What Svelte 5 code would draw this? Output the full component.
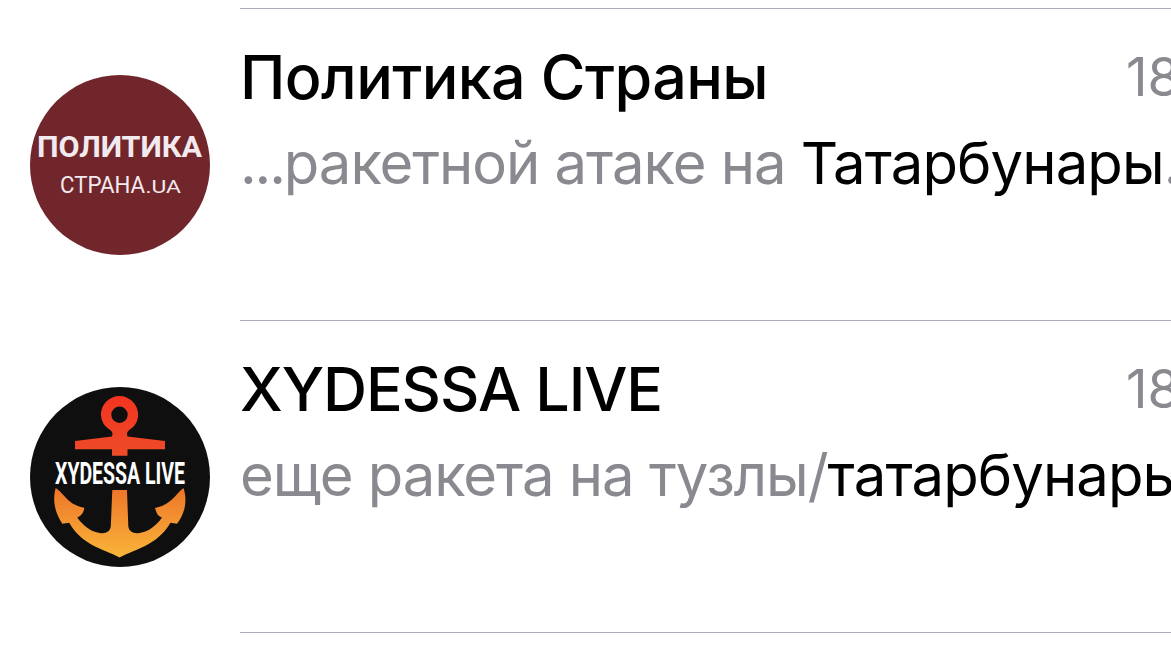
<script lang="ts">
  interface Part {
    text: string;
    kind?: 'match' | 'lead';
  }

  interface Chat {
    id: string;
    title: string;
    time: string;
    parts: Part[];
  }

  const chats: Chat[] = [
    {
      id: 'politika',
      title: 'Политика Страны',
      time: '18:05',
      parts: [
        { text: '...', kind: 'lead' },
        { text: 'ракетной атаке на ' },
        { text: 'Татарбунары', kind: 'match' },
        { text: '...' }
      ]
    },
    {
      id: 'xydessa',
      title: 'XYDESSA LIVE',
      time: '18:04',
      parts: [
        { text: 'еще ракета на тузлы/' },
        { text: 'татарбунары', kind: 'match' }
      ]
    }
  ];
</script>

<div class="chat-list">
  {#each chats as chat (chat.id)}
    <div class="chat">
      <svg class="avatar" viewBox="0 0 180 180" aria-label={chat.title}>
        {#if chat.id === 'politika'}
          <circle cx="90" cy="90" r="90" fill="#70262a" />
          <text class="logo-bold" x="7" y="81.5" textLength="165" lengthAdjust="spacingAndGlyphs">ПОЛИТИКА</text>
          <text class="logo-thin" x="30" y="117.5" textLength="85" lengthAdjust="spacingAndGlyphs">СТРАНА</text>
          <text class="logo-small" x="115.5" y="117.5" textLength="35.5" lengthAdjust="spacingAndGlyphs">.UA</text>
        {:else}
          <defs>
            <linearGradient id="anchor" gradientUnits="userSpaceOnUse" x1="0" y1="9" x2="0" y2="171">
              <stop offset="0" stop-color="#f23420" />
              <stop offset="0.35" stop-color="#ee4a28" />
              <stop offset="0.62" stop-color="#ef7d2b" />
              <stop offset="1" stop-color="#f9b53a" />
            </linearGradient>
          </defs>
          <circle cx="90" cy="90" r="90" fill="#0e0f0e" />
          <g fill="url(#anchor)">
            <path
              fill-rule="evenodd"
              d="M89.500 9a18.600 18.600 0 0 1 18.600 18.600c0 7-3.600 12.500-9.100 15.600-2 1.500-2.500 4-1.500 6.200l37.500 4.500v8.400H97.500v6.400H82v-6.400H45v-8.400l37-4.500c1-2.200.500-4.700-1.500-6.200a18.600 18.600 0 0 1-9.600-15.600A18.600 18.600 0 0 1 89.500 9zM89.500 19.500a8.200 8.200 0 1 0 0 16.400 8.200 8.200 0 0 0 0-16.400z"
            />
            <path
              d="M82.300 103H97l1.300 36c.300 5 4.700 8 11.200 7 9-1.300 17-7.500 22.500-15.500-4-1.500-5-3-7-9.500 10.500-2 16-7.500 20-11.500 3-3.500 5.500-6.500 8.500-8.500 3 9 2.200 18.500-.500 25-1.500 4-3.500 7.500-6 10.700l-6.500-1c-5.500 9.500-14.500 18-26 23.500-10 4.500-18 7.500-25 11.300-7-3.800-15-6.800-25-11.300-11-5.500-20-14-25.300-23.500l-6.900 1c-5.300-8-7.300-14.700-8-21.700-.400-5 .200-10 1.400-14 3.300 2 5.800 5 9 8.500 4.300 4.500 9 9.500 19.600 11.200-.300 4.300-3 8.300-7 9.800 5.500 8 13.500 14.200 22.500 15.500 6.500 1 10.700-2 11-7z"
            />
          </g>
          <text class="logo-narrow" x="25" y="97" textLength="130" lengthAdjust="spacingAndGlyphs">XYDESSA LIVE</text>
        {/if}
      </svg>
      <div class="body">
        <div class="head">
          <span class="title {chat.id}">{chat.title}</span>
          <span class="time">{chat.time}</span>
        </div>
        <div class="message">
          {#each chat.parts as part}<span class={part.kind}>{part.text}</span>{/each}
        </div>
      </div>
    </div>
  {/each}
</div>

<style>
  :global(body) {
    background: #fff;
    overflow: hidden;
  }

  .chat-list {
    height: 649px;
    padding-top: 8px;
    box-sizing: border-box;
    overflow: hidden;
    font-family: Inter, 'Liberation Sans', sans-serif;
  }

  .chat {
    display: flex;
    gap: 30px;
    height: 312px;
    padding-left: 30px;
  }

  .avatar {
    flex: none;
    width: 180px;
    height: 180px;
    margin-top: 67px;
  }

  .body {
    flex: 1;
    min-width: 0;
    height: 313px;
    padding-top: 28px;
    box-sizing: border-box;
    border-top: 1px solid #adacb8;
    border-bottom: 1px solid #adacb8;
    white-space: nowrap;
  }

  .head {
    display: flex;
    justify-content: space-between;
    height: 80px;
  }

  .title {
    color: #000;
    font-size: 61px;
    font-weight: 500;
    line-height: 80px;
  }

  .title.politika {
    letter-spacing: -0.6px;
  }

  .title.xydessa {
    letter-spacing: -1.1px;
  }

  .time {
    width: 45px;
    color: #8a8990;
    font-size: 53px;
    line-height: 81px;
  }

  .message {
    height: 92px;
    color: #8a8990;
    font-size: 58px;
    letter-spacing: -1.05px;
    line-height: 92px;
    white-space: pre;
  }

  .lead {
    letter-spacing: -2.1px;
  }

  .match {
    color: #000;
    letter-spacing: -0.9px;
  }

  .logo-bold,
  .logo-thin,
  .logo-small {
    fill: #f3eaf0;
    font-family: Roboto, sans-serif;
  }

  .logo-bold {
    font-size: 30px;
    font-weight: 700;
  }

  .logo-thin {
    font-size: 23px;
    font-weight: 400;
  }

  .logo-small {
    font-size: 18px;
  }

  .logo-narrow {
    fill: #fff;
    font-family: Roboto, sans-serif;
    font-size: 31px;
    font-weight: 700;
  }
</style>
